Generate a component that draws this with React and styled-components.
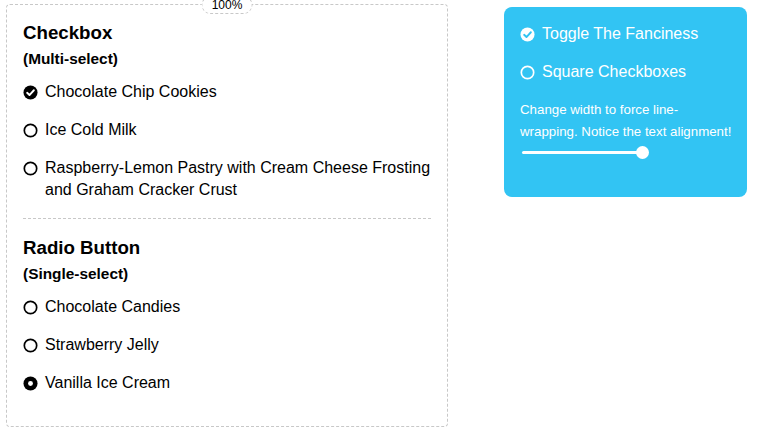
import React from 'react';
import styled, { createGlobalStyle } from 'styled-components';

const GlobalStyle = createGlobalStyle`
    body {
        margin: 0;
        background: #fff;
        font-family: "Liberation Sans", Arial, sans-serif;
        color: #000;
    }
`;

const Page = styled.div`
    display: flex;
    align-items: flex-start;
    gap: 56px;
    padding: 4px 0 0 6px;
`;

const Panel = styled.div`
    position: relative;
    box-sizing: border-box;
    width: 442px;
    height: 423px;
    border: 1px dashed #c8c8c8;
    border-radius: 4px;
    padding: 17px 16px 0 16px;
`;

const Badge = styled.div`
    position: absolute;
    top: -9px;
    left: 50%;
    transform: translateX(-50%);
    box-sizing: border-box;
    width: 51px;
    height: 18px;
    border: 1px dashed #c8c8c8;
    border-radius: 9px;
    background: #fff;
    font-size: 12px;
    line-height: 17px;
    text-align: center;
`;

const Heading = styled.h3`
    margin: ${p => p.$top ?? 0}px 0 0;
    font-size: 18.7px;
    line-height: 22px;
    font-weight: bold;
`;

const SubHeading = styled.h5`
    margin: 5px 0 0;
    font-size: 15.4px;
    line-height: 20px;
    font-weight: bold;
`;

const List = styled.div`
    display: flex;
    flex-direction: column;
    gap: 16px;
    margin-top: ${p => p.$top ?? 12}px;
`;

const Item = styled.label`
    display: flex;
    align-items: flex-start;
    gap: 7px;
    font-size: 16px;
    line-height: 22px;
    color: ${p => p.$light ? '#fff' : '#000'};
    svg {
        flex: none;
        margin-top: 3.5px;
    }
`;

const Divider = styled.div`
    margin-top: 17px;
    border-top: 1px dashed #c8c8c8;
`;

const Settings = styled.div`
    box-sizing: border-box;
    width: 243px;
    height: 190px;
    margin-top: 3px;
    padding: 16px 8px 0 16px;
    background: #32c4f3;
    border-radius: 8px;
    color: #fff;
`;

const Note = styled.p`
    margin: 16px 0 0;
    font-size: 13.3px;
    line-height: 22px;
    white-space: nowrap;
`;

const Slider = styled.div`
    position: relative;
    width: 127px;
    height: 12px;
    margin: 3px 0 0 2px;
`;

const Track = styled.div`
    position: absolute;
    left: 0;
    right: 6px;
    top: 5px;
    height: 3px;
    border-radius: 2px;
    background: #fff;
`;

const Thumb = styled.div`
    position: absolute;
    right: 0;
    top: 0;
    width: 13px;
    height: 13px;
    border-radius: 50%;
    background: #fff;
`;

const Icon = ({ kind, fg = '#000', bg = '#fff' }) => (
    <svg width="15" height="15" viewBox="0 0 16 16">
        {kind === 'check' && (
            <>
                <circle cx="8" cy="8" r="7.5" fill={fg} />
                <path d="M4.4 8.3 L6.9 10.7 L11.6 5.6" fill="none" stroke={bg} strokeWidth="2" strokeLinecap="round" strokeLinejoin="round" />
            </>
        )}
        {kind === 'empty' && <circle cx="8" cy="8" r="6.6" fill="none" stroke={fg} strokeWidth="1.8" />}
        {kind === 'radio' && (
            <>
                <circle cx="8" cy="8" r="7.5" fill={fg} />
                <circle cx="8" cy="8" r="2.6" fill={bg} />
            </>
        )}
    </svg>
);

const checkboxes = [
    { label: 'Chocolate Chip Cookies', kind: 'check' },
    { label: 'Ice Cold Milk', kind: 'empty' },
    { label: 'Raspberry-Lemon Pastry with Cream Cheese Frosting and Graham Cracker Crust', kind: 'empty' },
];

const radios = [
    { label: 'Chocolate Candies', kind: 'empty' },
    { label: 'Strawberry Jelly', kind: 'empty' },
    { label: 'Vanilla Ice Cream', kind: 'radio' },
];

export default function App() {
    return (
        <>
            <GlobalStyle />
            <Page>
                <Panel>
                    <Badge>100%</Badge>
                    <Heading>Checkbox</Heading>
                    <SubHeading>(Multi-select)</SubHeading>
                    <List>
                        {checkboxes.map(c => (
                            <Item key={c.label}>
                                <Icon kind={c.kind} />
                                <span>{c.label}</span>
                            </Item>
                        ))}
                    </List>
                    <Divider />
                    <Heading $top={18}>Radio Button</Heading>
                    <SubHeading>(Single-select)</SubHeading>
                    <List $top={12}>
                        {radios.map(r => (
                            <Item key={r.label}>
                                <Icon kind={r.kind} />
                                <span>{r.label}</span>
                            </Item>
                        ))}
                    </List>
                </Panel>
                <Settings>
                    <List $top={0}>
                        <Item $light>
                            <Icon kind="check" fg="#fff" bg="#32c4f3" />
                            <span>Toggle The Fanciness</span>
                        </Item>
                        <Item $light>
                            <Icon kind="empty" fg="#fff" />
                            <span>Square Checkboxes</span>
                        </Item>
                    </List>
                    <Note>Change width to force line-<br />wrapping. Notice the text alignment!</Note>
                    <Slider>
                        <Track />
                        <Thumb />
                    </Slider>
                </Settings>
            </Page>
        </>
    );
}
